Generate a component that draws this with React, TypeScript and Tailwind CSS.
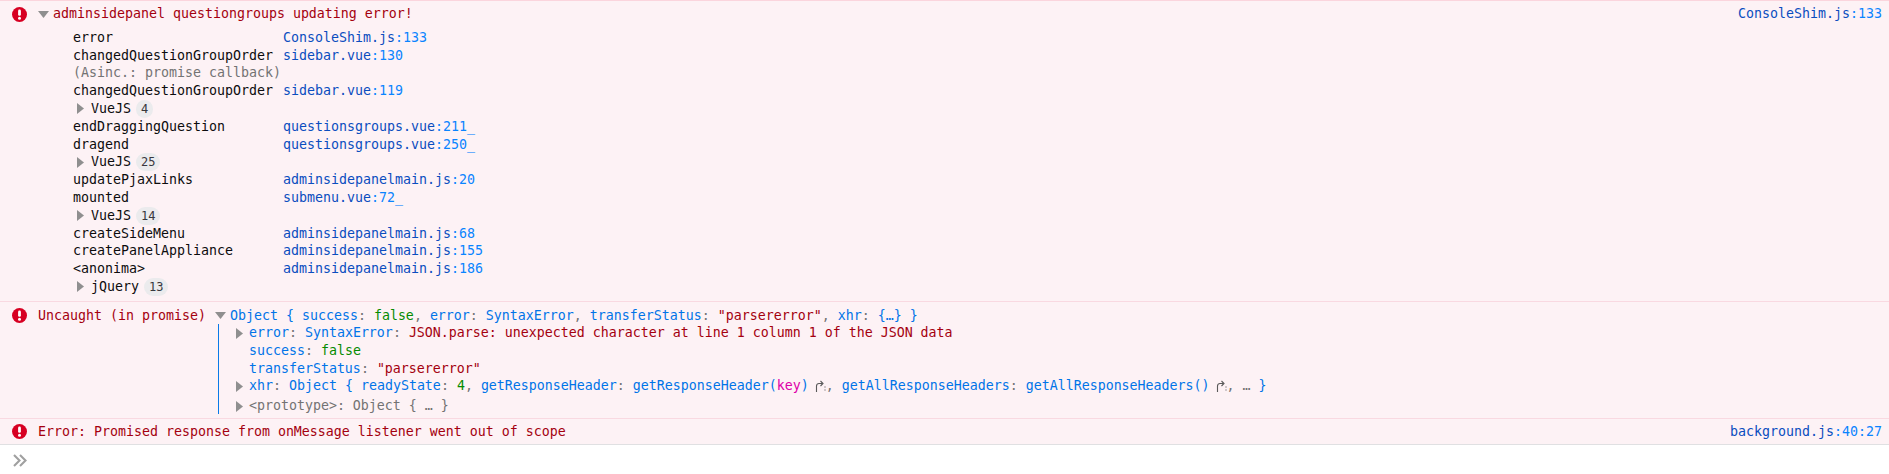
function ErrorIcon() {
  return (
    <svg width="15" height="15" viewBox="0 0 15 15" className="shrink-0">
      <circle cx="7.5" cy="7.5" r="7.5" fill="#d70022" />
      <rect x="6.1" y="2.6" width="2.8" height="6.2" rx="1.3" fill="#fff" />
      <circle cx="7.5" cy="11.3" r="1.5" fill="#fff" />
    </svg>
  );
}

function ArrowDown() {
  return (
    <svg width="11" height="7" viewBox="0 0 11 7" className="shrink-0">
      <path d="M0 0h11L5.5 7z" fill="#8f8f8f" />
    </svg>
  );
}

function ArrowRight() {
  return (
    <svg width="7" height="11" viewBox="0 0 7 11" className="shrink-0">
      <path d="M0 0l7 5.5L0 11z" fill="#8f8f8f" />
    </svg>
  );
}

function Jump() {
  return (
    <svg width="11" height="12" viewBox="0 0 11 12" className="inline-block align-[-2px] ml-[6px]" fill="none" stroke="#5a5a5a" strokeWidth="1.1">
      <path d="M1.5 12V6a2.5 2.5 0 0 1 2.5-2.5h3.5" />
      <path d="M5.5 1l2.5 2.5L5.5 6" />
      <path d="M10 6.5v1M10 9.5v1" />
    </svg>
  );
}

function Src({ name, pos }: { name: string; pos: string }) {
  return (
    <span>
      <span className="text-[#0a4dbf]">{name}</span>
      <span className="text-[#0a84ff]">{pos}</span>
    </span>
  );
}

function Frame({ fn, file, pos, tail }: { fn: string; file: string; pos: string; tail?: boolean }) {
  return (
    <>
      <span className="text-[#0c0c0d]">{fn}</span>
      <span>
        <Src name={file} pos={pos} />
        {tail && <span className="text-[#0a84ff]">_</span>}
      </span>
    </>
  );
}

function Group({ label, count }: { label: string; count: number }) {
  return (
    <div className="col-span-2 flex items-center pl-[4px] h-[18px] text-[#0c0c0d]">
      <ArrowRight />
      <span className="ml-[7px]">{label}</span>
      <span className="ml-[5px] h-[18px] px-[5px] rounded-full bg-[#ebebed] text-[#38383d] text-[12px] leading-[18px]">{count}</span>
    </div>
  );
}

const Blue = ({ children }: { children: React.ReactNode }) => <span className="text-[#0074e8]">{children}</span>;
const Gray = ({ children }: { children: React.ReactNode }) => <span className="text-[#737373]">{children}</span>;
const Green = ({ children }: { children: React.ReactNode }) => <span className="text-[#058b00]">{children}</span>;
const Red = ({ children }: { children: React.ReactNode }) => <span className="text-[#a4000f]">{children}</span>;

export default function App() {
  return (
    <div className="font-['DejaVu_Sans_Mono',monospace] h-[474px] w-full bg-white text-[13.29px] leading-[17.7px] overflow-hidden whitespace-pre">
      <div className="bg-[#fdf2f5] border-t border-[#fbd5dd]">
        <div className="border-b border-[#f9d9e1] pt-[4px] h-[301px]">
          <div className="flex items-center pl-[12px] pr-[7px] h-[18px]">
            <ErrorIcon />
            <span className="ml-[11px] flex"><ArrowDown /></span>
            <span className="ml-[4px] text-[#a4000f]">adminsidepanel questiongroups updating error!</span>
            <span className="ml-auto"><Src name="ConsoleShim.js" pos=":133" /></span>
          </div>
          <div className="grid grid-cols-[210px_1fr] pl-[73px] mt-[6px]">
            <Frame fn="error" file="ConsoleShim.js" pos=":133" />
            <Frame fn="changedQuestionGroupOrder" file="sidebar.vue" pos=":130" />
            <span className="col-span-2 text-[#737373]">(Asinc.: promise callback)</span>
            <Frame fn="changedQuestionGroupOrder" file="sidebar.vue" pos=":119" />
            <Group label="VueJS" count={4} />
            <Frame fn="endDraggingQuestion" file="questionsgroups.vue" pos=":211" tail />
            <Frame fn="dragend" file="questionsgroups.vue" pos=":250" tail />
            <Group label="VueJS" count={25} />
            <Frame fn="updatePjaxLinks" file="adminsidepanelmain.js" pos=":20" />
            <Frame fn="mounted" file="submenu.vue" pos=":72" tail />
            <Group label="VueJS" count={14} />
            <Frame fn="createSideMenu" file="adminsidepanelmain.js" pos=":68" />
            <Frame fn="createPanelAppliance" file="adminsidepanelmain.js" pos=":155" />
            <Frame fn="<anonima>" file="adminsidepanelmain.js" pos=":186" />
            <Group label="jQuery" count={13} />
          </div>
        </div>

        <div className="border-b border-[#f9d9e1] h-[117px] pt-[5px] pl-[12px] flex">
          <div className="h-[17px] flex items-center"><ErrorIcon /></div>
          <span className="ml-[11px] text-[#a4000f]">Uncaught (in promise)</span>
          <div className="ml-[9px]">
            <div className="flex items-center h-[17px]">
              <ArrowDown />
              <span className="ml-[4px]">
                <Blue>Object {"{ "}success</Blue><Gray>: </Gray><Green>false</Green><Gray>, </Gray>
                <Blue>error</Blue><Gray>: </Gray><Blue>SyntaxError</Blue><Gray>, </Gray>
                <Blue>transferStatus</Blue><Gray>: </Gray><Red>"parsererror"</Red><Gray>, </Gray>
                <Blue>xhr</Blue><Gray>: </Gray><Blue>{"{…} }"}</Blue>
              </span>
            </div>
            <div className="ml-[3px] border-l border-[#0a7ae8] pl-[17px] h-[90px]">
              <div className="flex items-center h-[18px]">
                <ArrowRight />
                <span className="ml-[6px]"><Blue>error</Blue><Gray>: </Gray><Blue>SyntaxError</Blue><Gray>: </Gray><Red>JSON.parse: unexpected character at line 1 column 1 of the JSON data</Red></span>
              </div>
              <div className="h-[17.6px] pl-[13px]"><Blue>success</Blue><Gray>: </Gray><Green>false</Green></div>
              <div className="h-[17.6px] pl-[13px]"><Blue>transferStatus</Blue><Gray>: </Gray><Red>"parsererror"</Red></div>
              <div className="flex items-center h-[18px]">
                <ArrowRight />
                <span className="ml-[6px]">
                  <Blue>xhr</Blue><Gray>: </Gray><Blue>Object {"{ "}readyState</Blue><Gray>: </Gray><Green>4</Green><Gray>, </Gray>
                  <Blue>getResponseHeader</Blue><Gray>: </Gray><Blue>getResponseHeader(</Blue><span className="text-[#dd00a9]">key</span><Blue>)</Blue><Jump /><Gray>, </Gray>
                  <Blue>getAllResponseHeaders</Blue><Gray>: </Gray><Blue>getAllResponseHeaders()</Blue><Jump /><Gray>, … </Gray><Blue>{"}"}</Blue>
                </span>
              </div>
              <div className="flex items-center h-[18px] mt-[2px]">
                <ArrowRight />
                <span className="ml-[6px] text-[#737373]">{"<prototype>: Object { … }"}</span>
              </div>
            </div>
          </div>
        </div>

        <div className="border-b border-[#e0e0e2] h-[26px] pl-[12px] pr-[7px] flex items-center">
          <ErrorIcon />
          <span className="ml-[11px] text-[#a4000f]">Error: Promised response from onMessage listener went out of scope</span>
          <span className="ml-auto"><Src name="background.js" pos=":40:27" /></span>
        </div>
      </div>
      <div className="pl-[13px] pt-[9px]">
        <svg width="14" height="13" viewBox="0 0 14 13" fill="none" stroke="#a0a0a0" strokeWidth="2.1">
          <path d="M1 1l5.5 5.5L1 12" />
          <path d="M7 1l5.5 5.5L7 12" />
        </svg>
      </div>
    </div>
  );
}
